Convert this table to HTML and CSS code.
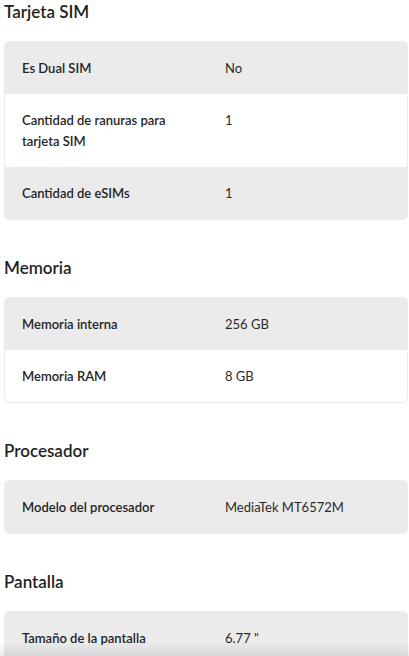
FILE: index.html
```html
<!DOCTYPE html>
<html lang="es">
<head>
<meta charset="utf-8">
<title>Especificaciones</title>
<link rel="stylesheet" href="styles.css">
</head>
<body>
<main class="specs">
  <section class="group">
    <h2 class="group-title">Tarjeta SIM</h2>
    <div class="card">
      <div class="row shaded"><span class="label">Es Dual SIM</span><span class="value">No</span></div>
      <div class="row"><span class="label">Cantidad de ranuras para tarjeta SIM</span><span class="value">1</span></div>
      <div class="row shaded"><span class="label">Cantidad de eSIMs</span><span class="value">1</span></div>
    </div>
  </section>
  <section class="group">
    <h2 class="group-title">Memoria</h2>
    <div class="card">
      <div class="row shaded"><span class="label">Memoria interna</span><span class="value">256 GB</span></div>
      <div class="row"><span class="label">Memoria RAM</span><span class="value">8 GB</span></div>
    </div>
  </section>
  <section class="group">
    <h2 class="group-title">Procesador</h2>
    <div class="card">
      <div class="row shaded"><span class="label">Modelo del procesador</span><span class="value">MediaTek MT6572M</span></div>
    </div>
  </section>
  <section class="group">
    <h2 class="group-title">Pantalla</h2>
    <div class="card card-open">
      <div class="row shaded"><span class="label">Tamaño de la pantalla</span><span class="value">6.77 "</span></div>
    </div>
  </section>
</main>
<div class="bottom-shade"></div>
</body>
</html>
```
FILE: styles.css
```css
html, body {
  margin: 0;
  padding: 0;
  background: #ffffff;
}
body {
  font-family: Lato, "Open Sans", "Liberation Sans", sans-serif;
  color: #222222;
}
.specs {
  padding: 0 1px 0 4px;
  display: flex;
  flex-direction: column;
  gap: 36px;
}
.group-title {
  margin: 0 0 17px;
  font-size: 17px;
  line-height: 24px;
  font-weight: 600;
  color: #1f1f1f;
}
.card {
  border: 1px solid #ececec;
  border-radius: 5px;
  overflow: hidden;
  background: #ffffff;
}
.card-open {
  padding-bottom: 30px;
  background: #ebebeb;
}
.row {
  display: grid;
  grid-template-columns: 203px 1fr;
  padding: 15.5px 17px;
  font-size: 13px;
  line-height: 21px;
}
.row.shaded {
  background: #ebebeb;
}
.label {
  font-weight: 600;
  padding-right: 40px;
  color: #252525;
}
.value {
  font-weight: 400;
  color: #2a2a2a;
}
.bottom-shade {
  position: fixed;
  left: 0;
  right: 0;
  bottom: 0;
  height: 14px;
  background: linear-gradient(to bottom, rgba(0,0,0,0), rgba(0,0,0,0.08));
  pointer-events: none;
}
```
